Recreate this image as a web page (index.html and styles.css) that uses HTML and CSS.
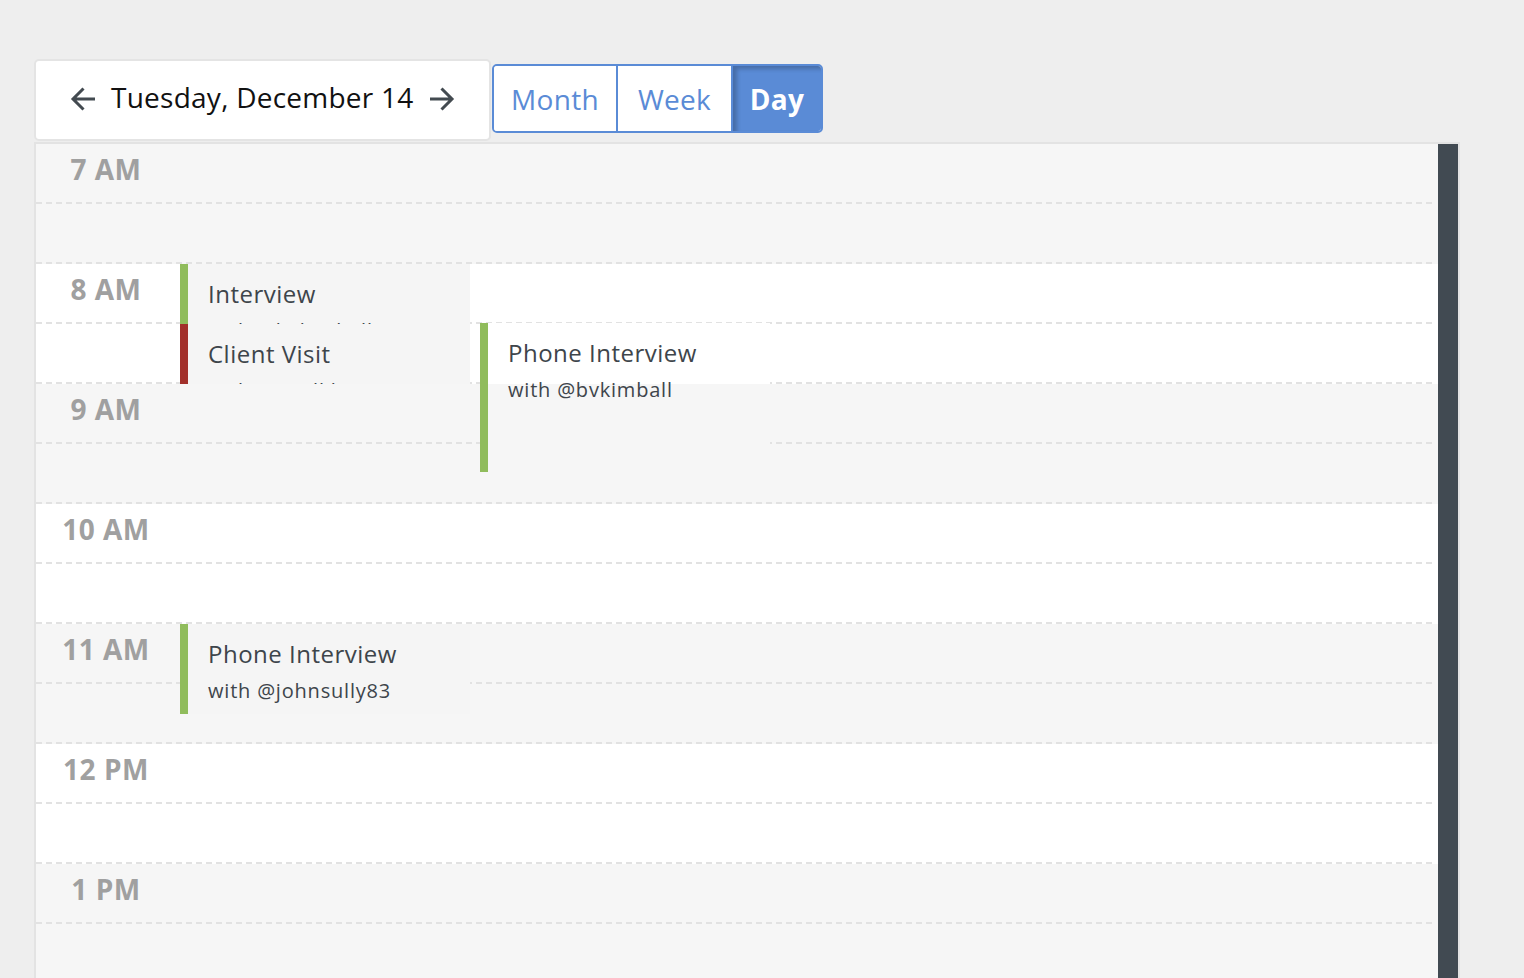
FILE: index.html
```html
<!DOCTYPE html>
<html lang="en">
<head>
<meta charset="utf-8">
<title>Day view</title>
<link rel="stylesheet" href="styles.css">
</head>
<body>
<div class="page">
  <div class="toolbar">
    <div class="datebox">
      <button class="nav" aria-label="Previous day">
        <svg width="26" height="24" viewBox="0 0 26 24"><path d="M25 12H3M13.5 1.5L3 12l10.5 10.5" fill="none" stroke="#434a50" stroke-width="3"/></svg>
      </button>
      <span class="date">Tuesday, December 14</span>
      <button class="nav" aria-label="Next day">
        <svg width="26" height="24" viewBox="0 0 26 24"><path d="M1 12h22M12.5 1.5L23 12 12.5 22.5" fill="none" stroke="#434a50" stroke-width="3"/></svg>
      </button>
    </div>
    <div class="views">
      <button class="view">Month</button>
      <button class="view">Week</button>
      <button class="view active">Day</button>
    </div>
  </div>

  <div class="calendar">
    <div class="grid">
      <div class="hour shade"><div class="slot"><span class="label">7 AM</span></div><div class="slot"></div></div>
      <div class="hour"><div class="slot"><span class="label">8 AM</span></div><div class="slot"></div></div>
      <div class="hour shade"><div class="slot"><span class="label">9 AM</span></div><div class="slot"></div></div>
      <div class="hour"><div class="slot"><span class="label">10 AM</span></div><div class="slot"></div></div>
      <div class="hour shade"><div class="slot"><span class="label">11 AM</span></div><div class="slot"></div></div>
      <div class="hour"><div class="slot"><span class="label">12 PM</span></div><div class="slot"></div></div>
      <div class="hour shade"><div class="slot"><span class="label">1 PM</span></div><div class="slot"></div></div>
      <div class="hour"><div class="slot"><span class="label">2 PM</span></div><div class="slot"></div></div>
      <div class="hour shade"><div class="slot"><span class="label">3 PM</span></div><div class="slot"></div></div>

      <div class="event green" style="top:120px;left:144px;height:60px">
        <div class="title">Interview</div>
        <div class="sub">with @bvkimball</div>
      </div>
      <div class="event red" style="top:180px;left:144px;height:60px">
        <div class="title">Client Visit</div>
        <div class="sub">with @ericlliliw</div>
      </div>
      <div class="event green split" style="top:179px;left:444px;height:149px">
        <div class="title">Phone Interview</div>
        <div class="sub">with @bvkimball</div>
      </div>
      <div class="event green" style="top:480px;left:144px;height:90px">
        <div class="title">Phone Interview</div>
        <div class="sub">with @johnsully83</div>
      </div>
    </div>
    <div class="scrollbar"></div>
  </div>
</div>
</body>
</html>
```
FILE: styles.css
```css
html, body {
  margin: 0;
  padding: 0;
  height: 100%;
  overflow: hidden;
}
body {
  background: #eeeeee;
  font-family: "Open Sans", "Noto Sans", sans-serif;
  color: #3e454b;
}
.page {
  padding: 59px 0 0 34px;
  width: 1426px;
}
.toolbar {
  display: flex;
  align-items: flex-start;
  gap: 1px;
  margin-bottom: 1px;
}
.datebox {
  box-sizing: border-box;
  width: 457px;
  height: 82px;
  background: #fff;
  border: 2px solid #e4e4e4;
  border-radius: 5px;
  display: flex;
  align-items: center;
  padding: 0 0 7px 34px;
  gap: 15px;
}
.nav {
  border: 0;
  background: none;
  padding: 0;
  width: 26px;
  height: 24px;
  display: flex;
  margin-top: 5px;
}
.date {
  font-size: 28px;
  color: #111;
  letter-spacing: 0.25px;
}
.views {
  display: flex;
  margin-top: 5px;
  height: 69px;
  box-sizing: border-box;
  border: 2px solid #5a8bd6;
  border-radius: 5px;
  overflow: hidden;
}
.view {
  font-family: "Open Sans", "Noto Sans", sans-serif;
  font-size: 28px;
  letter-spacing: 0.3px;
  color: #5a8bd6;
  background: #fff;
  border: 0;
  border-left: 2px solid #5a8bd6;
  padding: 0;
  height: 100%;
}
.view:first-child {
  border-left: 0;
  width: 122px;
}
.view:nth-child(2) {
  width: 115px;
}
.view.active {
  width: 90px;
  background: #5a8bd6;
  color: #fff;
  font-weight: 700;
  box-shadow: inset 4px 3px 4px rgba(0, 0, 0, 0.22);
}
.calendar {
  display: flex;
  border: 2px solid #e3e3e3;
  border-bottom: 0;
  background: #fff;
}
.grid {
  position: relative;
  flex: 1;
}
.hour {
  background: #fff;
}
.hour.shade {
  background: #f6f6f6;
}
.slot {
  position: relative;
  height: 60px;
  box-sizing: border-box;
}
.slot::after {
  content: "";
  position: absolute;
  left: 0;
  right: 4px;
  bottom: 0;
  height: 2px;
  background: repeating-linear-gradient(to right, #e2e2e2 0 6px, transparent 6px 10px);
}
.label {
  display: block;
  width: 140px;
  text-align: center;
  padding-top: 9px;
  font-size: 28px;
  line-height: 32px;
  letter-spacing: 0.5px;
  font-weight: 700;
  color: #a0a0a0;
}
.event {
  position: absolute;
  z-index: 1;
  width: 290px;
  box-sizing: border-box;
  padding: 16px 0 0 20px;
  background: #f5f5f5;
  border-left: 8px solid #90bc5c;
  overflow: hidden;
}
.event.red {
  border-left-color: #a2302b;
}
.event.split {
  background: linear-gradient(#fff 0 61px, #f6f6f6 61px);
}
.title {
  font-size: 24px;
  line-height: 28px;
  letter-spacing: 0.5px;
  color: #3e454b;
  white-space: nowrap;
}
.sub {
  margin-top: 11px;
  font-size: 20px;
  line-height: 24px;
  letter-spacing: 0.8px;
  color: #3e454b;
  white-space: nowrap;
}
.scrollbar {
  width: 20px;
  background: #414a52;
}
```
